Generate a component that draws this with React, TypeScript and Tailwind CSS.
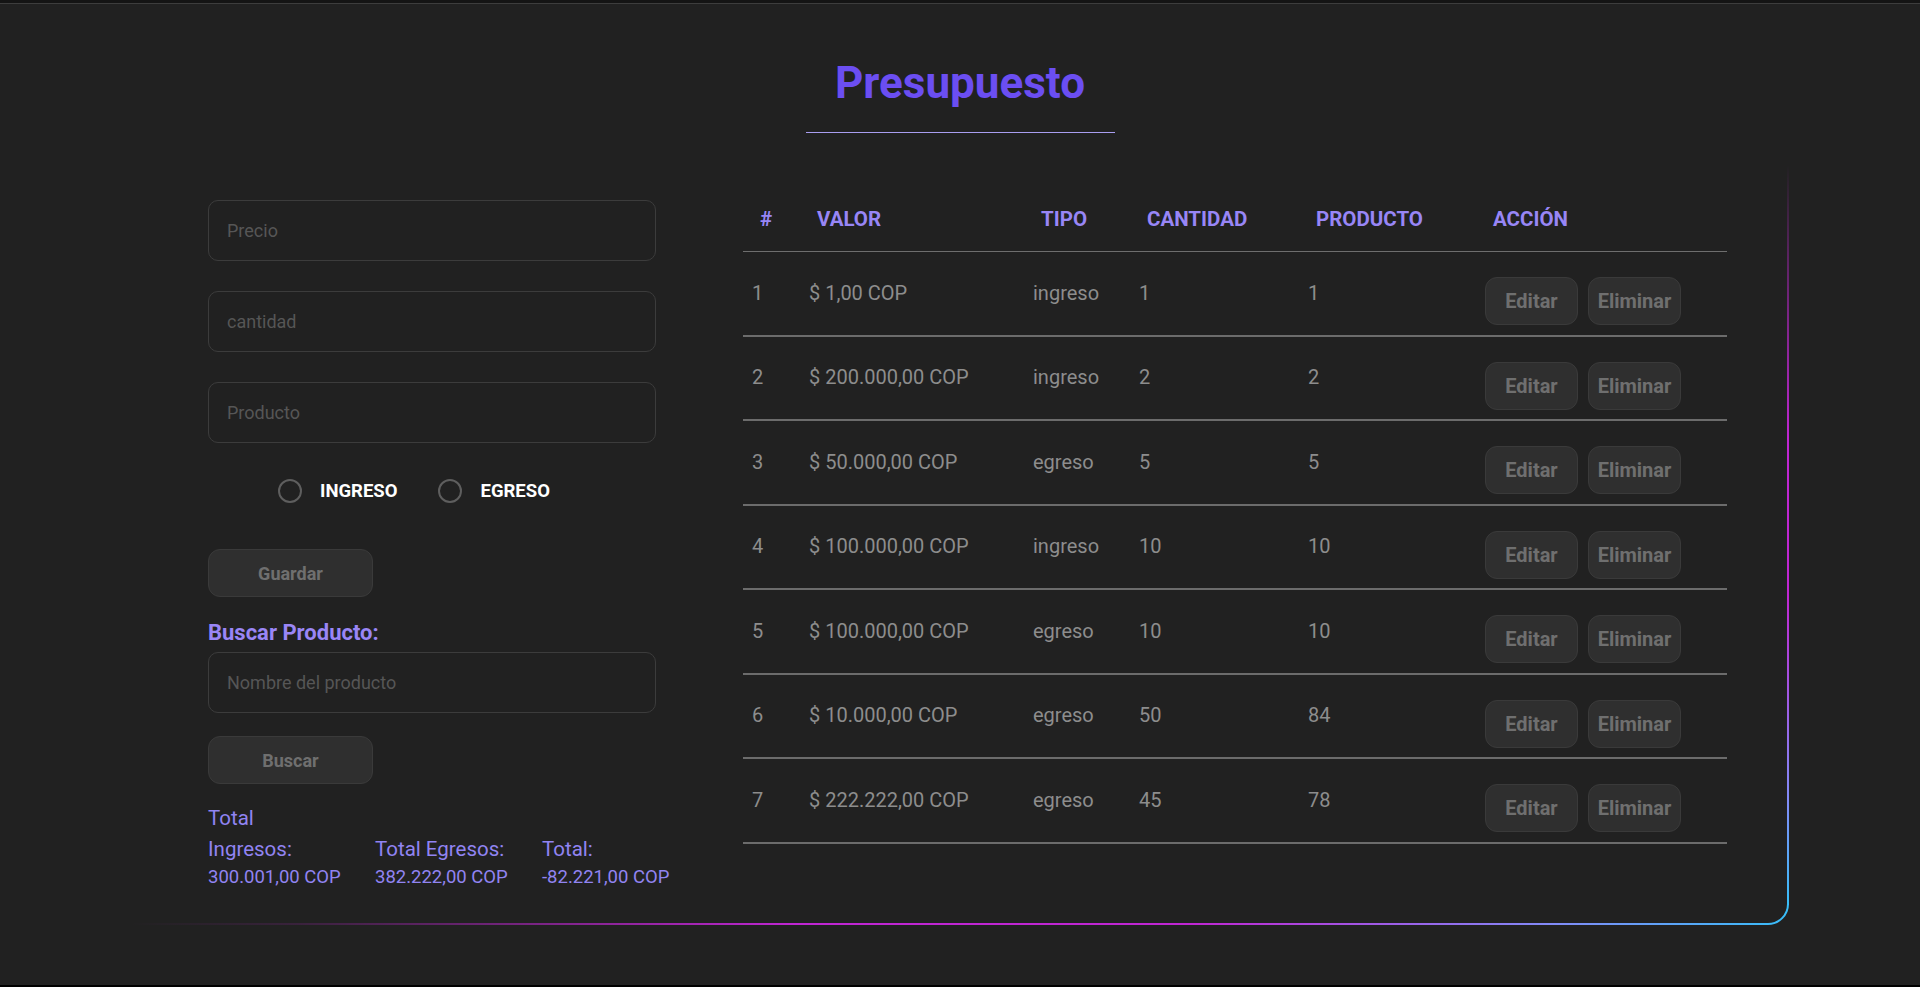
import React from "react";

const rows = [
  { n: 1, valor: "$ 1,00 COP", tipo: "ingreso", cant: "1", prod: "1" },
  { n: 2, valor: "$ 200.000,00 COP", tipo: "ingreso", cant: "2", prod: "2" },
  { n: 3, valor: "$ 50.000,00 COP", tipo: "egreso", cant: "5", prod: "5" },
  { n: 4, valor: "$ 100.000,00 COP", tipo: "ingreso", cant: "10", prod: "10" },
  { n: 5, valor: "$ 100.000,00 COP", tipo: "egreso", cant: "10", prod: "10" },
  { n: 6, valor: "$ 10.000,00 COP", tipo: "egreso", cant: "50", prod: "84" },
  { n: 7, valor: "$ 222.222,00 COP", tipo: "egreso", cant: "45", prod: "78" },
];

const headers = ["#", "VALOR", "TIPO", "CANTIDAD", "PRODUCTO", "ACCIÓN"];

function Input({ placeholder }: { placeholder: string }) {
  return (
    <input
      placeholder={placeholder}
      className="block w-full h-[61px] rounded-[10px] border border-[#3c3c3c] bg-transparent px-[18px] text-[18px] text-[#cfcfcf] placeholder:text-[#565656] outline-none"
    />
  );
}

function Radio({ label }: { label: string }) {
  return (
    <label className="flex items-center gap-[18px]">
      <span className="block w-6 h-6 rounded-full border-2 border-[#5e5e5e]" />
      <span className="text-white font-bold text-[18.5px] leading-[24px]">{label}</span>
    </label>
  );
}

function GlowBorder() {
  return (
    <svg
      className="absolute inset-0 pointer-events-none"
      width="1658"
      height="792"
      viewBox="0 0 1658 792"
      fill="none"
    >
      <defs>
        <linearGradient id="gb" gradientUnits="userSpaceOnUse" x1="0" y1="0" x2="1657" y2="0">
          <stop offset="0" stopColor="#c026d3" stopOpacity="0" />
          <stop offset="0.1" stopColor="#c026d3" stopOpacity="0.15" />
          <stop offset="0.4" stopColor="#c026d3" stopOpacity="1" />
          <stop offset="0.64" stopColor="#c026d3" stopOpacity="1" />
          <stop offset="0.86" stopColor="#818cf8" stopOpacity="1" />
          <stop offset="1" stopColor="#38bdf8" stopOpacity="1" />
        </linearGradient>
        <linearGradient id="gr" gradientUnits="userSpaceOnUse" x1="0" y1="32" x2="0" y2="771">
          <stop offset="0" stopColor="#c026d3" stopOpacity="0" />
          <stop offset="0.12" stopColor="#c026d3" stopOpacity="0.35" />
          <stop offset="0.37" stopColor="#c026d3" stopOpacity="1" />
          <stop offset="0.58" stopColor="#c026d3" stopOpacity="1" />
          <stop offset="0.86" stopColor="#818cf8" stopOpacity="1" />
          <stop offset="1" stopColor="#38bdf8" stopOpacity="1" />
        </linearGradient>
      </defs>
      <path d="M0 791 H1637 A20 20 0 0 0 1657 771" stroke="url(#gb)" strokeWidth="2" />
      <path d="M1657 772 V32" stroke="url(#gr)" strokeWidth="2" />
    </svg>
  );
}

export default function App() {
  return (
    <div className="h-[987px] flex flex-col bg-[#212121] font-['Roboto',sans-serif] overflow-hidden">
      <div className="h-[3px] bg-[#141414]" />
      <div className="h-px bg-[#3d3d3d]" />

      <div className="pt-[53px]">
        <div className="w-[309px] mx-auto border-b border-[#a99ef0] pb-[23px]">
          <h1 className="text-center text-[44px] leading-[52px] font-bold text-[#6b4ef2]">
            Presupuesto
          </h1>
        </div>
      </div>

      <div className="relative w-[1658px] h-[792px] mx-auto">
        <GlowBorder />
        <div className="flex pt-[67px] pl-[77px]">
          {/* Left column */}
          <div className="w-[448px] flex flex-col">
            <div className="flex flex-col gap-[30px]">
              <Input placeholder="Precio" />
              <Input placeholder="cantidad" />
              <Input placeholder="Producto" />
            </div>
            <div className="flex items-center gap-[41px] mt-[36px] pl-[70px]">
              <Radio label="INGRESO" />
              <Radio label="EGRESO" />
            </div>
            <button className="mt-[46px] w-[165px] h-[48px] rounded-[12px] bg-[#2f2f2f] border border-[#3a3a3a] text-[#6f6f6f] text-[18px] font-bold">
              Guardar
            </button>
            <div className="mt-[23px] text-[22px] leading-[26px] font-bold text-[#9a86f6]">
              Buscar Producto:
            </div>
            <div className="mt-[6px]">
              <Input placeholder="Nombre del producto" />
            </div>
            <button className="mt-[23px] w-[165px] h-[48px] rounded-[12px] bg-[#2f2f2f] border border-[#3a3a3a] text-[#6f6f6f] text-[18px] font-bold">
              Buscar
            </button>
            <div className="mt-[19px] flex items-end gap-[33px] text-[#9184f2]">
              <div className="w-[134px] shrink-0">
                <div className="text-[20.5px] leading-[31px]">Total Ingresos:</div>
                <div className="text-[18.5px] leading-[25px] whitespace-nowrap">300.001,00 COP</div>
              </div>
              <div className="w-[134px] shrink-0">
                <div className="text-[20.5px] leading-[31px] whitespace-nowrap">Total Egresos:</div>
                <div className="text-[18.5px] leading-[25px] whitespace-nowrap">382.222,00 COP</div>
              </div>
              <div className="w-[134px] shrink-0">
                <div className="text-[20.5px] leading-[31px]">Total:</div>
                <div className="text-[18.5px] leading-[25px] whitespace-nowrap">-82.221,00 COP</div>
              </div>
            </div>
          </div>

          {/* Table */}
          <div className="ml-[87px] w-[984px]">
            <div className="grid grid-cols-[57px_224px_106px_169px_177px_251px] h-[52px] pt-[7px] border-b border-[#6e6e6e]">
              {headers.map((h) => (
                <div key={h} className="pl-[17px] text-[20.5px] leading-[24px] font-bold text-[#9886f6]">
                  {h}
                </div>
              ))}
            </div>
            {rows.map((r) => (
              <div
                key={r.n}
                className="grid grid-cols-[57px_224px_106px_169px_177px_251px] h-[84.5px] border-b-2 border-[#6c6c6c] text-[20px] leading-[24px] text-[#8d8d8d]"
              >
                <div className="pl-[9px] pt-[28.5px]">{r.n}</div>
                <div className="pl-[9px] pt-[28.5px]">{r.valor}</div>
                <div className="pl-[9px] pt-[28.5px]">{r.tipo}</div>
                <div className="pl-[9px] pt-[28.5px]">{r.cant}</div>
                <div className="pl-[9px] pt-[28.5px]">{r.prod}</div>
                <div className="pl-[9px] pt-[25px] flex gap-[10px] items-start">
                  <button className="w-[93px] h-[48px] rounded-[12px] bg-[#2f2f2f] border border-[#3a3a3a] text-[#6f6f6f] text-[20px] font-bold">
                    Editar
                  </button>
                  <button className="w-[93px] h-[48px] rounded-[12px] bg-[#2f2f2f] border border-[#3a3a3a] text-[#6f6f6f] text-[20px] font-bold">
                    Eliminar
                  </button>
                </div>
              </div>
            ))}
          </div>
        </div>
      </div>

      <div className="mt-auto h-[2px] bg-black" />
    </div>
  );
}
